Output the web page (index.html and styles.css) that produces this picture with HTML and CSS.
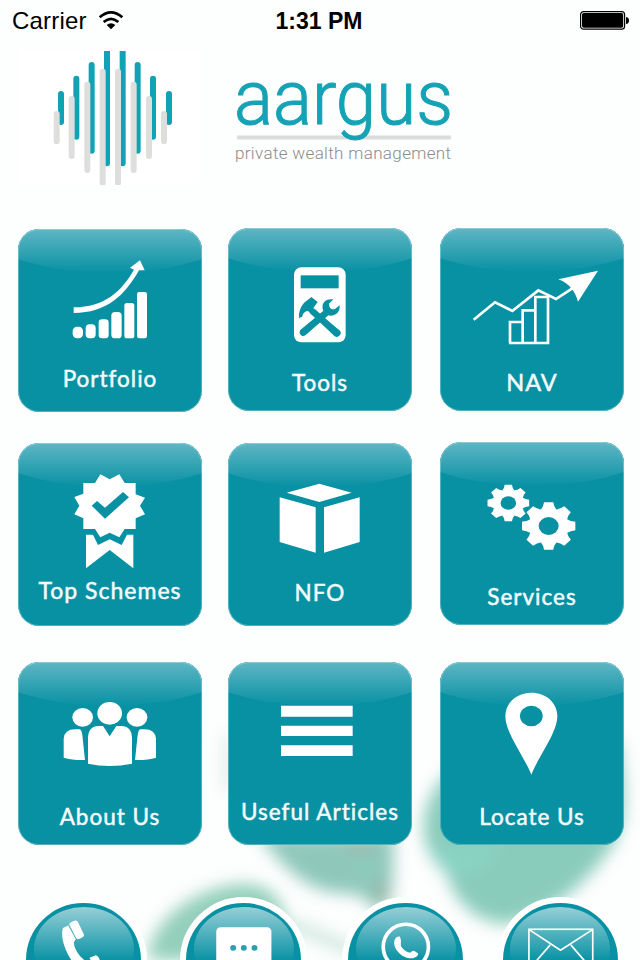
FILE: index.html
```html
<!DOCTYPE html>
<html lang="en">
<head>
    <meta charset="UTF-8">
    <meta name="viewport" content="width=device-width, initial-scale=1.0">
    <title>Aargus Private Wealth Management</title>
    <link rel="stylesheet" href="styles.css">
</head>
<body>
<div class="app">
    <svg class="leaves" viewBox="0 0 640 960">
        <g class="leaf-soft">
            <path fill="#8accbb" d="M425 815C430 780 470 745 530 740H618C626 790 628 825 608 852C585 885 545 918 505 924C470 921 452 895 447 874C430 860 420 840 425 815Z"/>
            <path fill="#89d3c4" d="M430 845H500C490 870 465 880 445 870Z"/>
            <path fill="#8fc8bb" d="M258 835H395C390 860 398 880 386 910H374C368 895 352 893 335 893C300 887 280 862 258 835Z"/>
            <path fill="#97b8a9" d="M374 878H388L388 905H376Z"/>
            <path fill="#9cb9ad" d="M345 840H375L372 854H350Z"/>
            <path fill="#88d0bf" d="M350 858L380 866L370 880Z"/>
            <path fill="#93cfba" d="M148 960C150 915 205 884 245 884C275 886 288 900 290 960Z"/>
            <path fill="none" stroke="#bfe0d5" stroke-width="9" d="M290 925C315 932 330 942 365 955"/>
            <path fill="none" stroke="#d3eae2" stroke-width="8" d="M228 735V790"/>
        </g>
    </svg>

    <div class="status-bar">
        <div class="carrier">
            <span>Carrier</span>
            <svg class="wifi" width="26" height="20" viewBox="0 0 78 60">
                <g fill="none" stroke="#000" stroke-width="8">
                    <path d="M5 22Q39-8 73 22"/>
                    <path d="M17 36Q39 17 61 36"/>
                </g>
                <path d="M26 45Q39 34 52 45L39 58Z"/>
            </svg>
        </div>
        <span class="time">1:31 PM</span>
        <svg class="battery" width="49" height="19" viewBox="0 0 49 19">
            <rect x=".6" y=".6" width="44" height="17.6" rx="3" fill="none" stroke="#000" stroke-width="1.2"/>
            <rect x="2" y="2" width="41.2" height="14.8" rx="1.8"/>
            <path d="M46 6Q49 6.500 49 9.400Q49 12.500 46 13Z"/>
        </svg>
    </div>

    <header class="brand">
        <svg class="brand-mark" width="182" height="134" viewBox="57 153 546 402">
            <g stroke="#10a3b5" stroke-width="18" stroke-linecap="round">
                <path d="M183 282V366M229 236V410M275 195V452M321 140V490M368 140V490M413 195V452M459 236V410M507 282V366"/>
            </g>
            <g stroke="#dededc" stroke-width="18" stroke-linecap="round">
                <path d="M170 342V424M215 297V468M262 254V510M308 215V549M354 215V549M401 254V510M447 297V468M492 342V424"/>
            </g>
        </svg>
        <svg class="brand-name" width="215" height="90" viewBox="0 0 215 90">
            <path d="M1 62.500H215" stroke="#dcdcdc" stroke-width="4"/>
            <text class="brand-word" x="-2" y="48.500" textLength="219" lengthAdjust="spacingAndGlyphs">aargus</text>
            <text class="brand-line" x="-1" y="84" textLength="216">private wealth management</text>
        </svg>
    </header>

    <main class="menu">
        <a class="tile drop">
            <svg viewBox="25 27 549 378">
                <g fill="#fff">
                    <rect x="189" y="320" width="31" height="35" rx="13"/>
                    <rect x="228" y="313" width="30" height="42" rx="12"/>
                    <rect x="267" y="298" width="30" height="57" rx="10"/>
                    <rect x="305" y="276" width="31" height="79" rx="11"/>
                    <rect x="344" y="249" width="30" height="106" rx="8"/>
                    <rect x="382" y="216" width="30" height="139" rx="7"/>
                    <path d="M192 262C285 261 335 215 373 149L361 143L391 121L405 151L388 151C345 227 291 279 192 279Z"/>
                </g>
            </svg>
            <span class="label portfolio">Portfolio</span>
        </a>
        <a class="tile">
            <svg viewBox="25 24 549 378">
                <rect x="223" y="142" width="155" height="225" rx="22" fill="#fff"/>
                <g fill="#0791a3">
                    <rect x="243" y="166" width="114" height="39"/>
                    <path d="M238 294C237 271 246 250 267 238L275 231L294 246L279 267L361 332A12 12 0 0 1 345 349L265 273C252 275 249 283 248 290Z"/>
                    <path d="M241 331L311 273C302 249 318 235 341 238L328 251C328 264 336 270 346 267L360 256C362 277 346 291 325 286L257 346A12 12 0 0 1 241 331Z"/>
                </g>
                <g stroke="#0791a3" stroke-width="19" stroke-linecap="round">
                    <path d="M250 338L318 280M280 275L351 338"/>
                </g>
            </svg>
            <span class="label tools">Tools</span>
        </a>
        <a class="tile">
            <svg viewBox="31 24 549 378">
                <g fill="none" stroke="#fff" stroke-width="8">
                    <path d="M132 299L196 247L248 273L326 211L379 237L428 205"/>
                    <path d="M241 369V306H279M279 369V271H317M317 369V231H355V369ZM238 369H355"/>
                </g>
                <path d="M386 178L505 152L445 245C438 219 421 190 386 178Z" fill="#fff"/>
            </svg>
            <span class="label nav">NAV</span>
        </a>
        <a class="tile drop">
            <svg viewBox="25 24 549 378">
                <path fill="#fff" d="M272 118L300 133L329 118L345 144H378V178L406 188L391 212L406 238L378 250V282H345L329 307L300 293L272 307L256 282H221V250L194 238L209 212L194 186L221 176V144H256Z"/>
                <path fill="#fff" d="M229 299H250L265 330L300 313L336 330L352 299H371V400L300 345L229 400Z"/>
                <path fill="#0791a3" d="M246 212L262 198L286 218L340 171L358 187L286 251Z"/>
            </svg>
            <span class="label schemes">Top Schemes</span>
        </a>
        <a class="tile drop">
            <svg viewBox="24 24 549 378">
                <path fill="#fff" d="M200 173L298 146L395 173L298 201ZM179 187L287 217V353L179 321ZM419 187L312 217V353L419 321Z"/>
            </svg>
            <span class="label nfo">NFO</span>
        </a>
        <a class="tile">
            <svg viewBox="31 21 549 378">
                <defs>
                    <path id="tooth" d="M-24-54Q-15-66-14-80H14Q15-66 24-54Z"/>
                    <g id="gear">
                        <circle r="59" fill="#fff"/>
                        <g fill="#fff">
                            <use href="#tooth"/>
                            <use href="#tooth" transform="rotate(45)"/>
                            <use href="#tooth" transform="rotate(90)"/>
                            <use href="#tooth" transform="rotate(135)"/>
                            <use href="#tooth" transform="rotate(180)"/>
                            <use href="#tooth" transform="rotate(225)"/>
                            <use href="#tooth" transform="rotate(270)"/>
                            <use href="#tooth" transform="rotate(315)"/>
                        </g>
                        <circle r="30" fill="#0791a3"/>
                    </g>
                </defs>
                <use href="#gear" transform="translate(236 204) scale(.78 .68)"/>
                <use href="#gear" transform="translate(357 273) scale(1 .89)"/>
            </svg>
            <span class="label services">Services</span>
        </a>
        <a class="tile">
            <svg viewBox="25 21 549 378">
                <g fill="#fff">
                    <ellipse cx="219" cy="187" rx="31" ry="28"/>
                    <ellipse cx="382" cy="187" rx="31" ry="28"/>
                    <ellipse cx="300" cy="175" rx="37" ry="34"/>
                    <path d="M162 308V252Q164 223 196 223H210Q216 225 218 240L226 315Q188 316 162 308Z"/>
                    <path d="M439 308V252Q437 223 405 223H392Q386 225 384 240L376 315Q414 316 439 308Z"/>
                    <path d="M235 326V249Q236 213 267 213H280L300 244L320 213H334Q366 213 367 249V326Q300 340 235 326Z"/>
                </g>
            </svg>
            <span class="label about">About Us</span>
        </a>
        <a class="tile">
            <svg viewBox="25 21 549 378">
                <path fill="#fff" d="M184 152H399V185H184ZM184 212H399V243H184ZM184 271H399V303H184Z"/>
            </svg>
            <span class="label articles">Useful Articles</span>
        </a>
        <a class="tile">
            <svg viewBox="661 21 549 378">
                <path fill="#fff" fill-rule="evenodd" d="M935 359C915 307 857 234 857 184C857 142 893 113 935 113C978 113 1013 142 1013 184C1013 234 955 307 935 359ZM935 152A34 31 0 1 0 935 214A34 31 0 1 0 935 152Z"/>
            </svg>
            <span class="label locate">Locate Us</span>
        </a>
    </main>

    <footer class="contact">
        <a class="round">
            <svg viewBox="79 188 346 346">
                <path fill="#fff" d="M190 263L206 256L229 298C218 306 223 324 242 348L270 375L260 410C215 375 178 305 190 263ZM209 252Q210 247 227 241Q233 240 236 247L254 284Q253 291 236 297L230 294ZM270 353L289 345Q294 345 298 353L310 380H285Z"/>
            </svg>
        </a>
        <a class="round">
            <svg viewBox="559 188 346 346">
                <rect x="650" y="261" width="166" height="140" rx="13" fill="#fff"/>
                <g fill="#2c9fb0">
                    <circle cx="701" cy="323" r="9"/>
                    <circle cx="733" cy="323" r="9"/>
                    <circle cx="765" cy="323" r="9"/>
                </g>
            </svg>
        </a>
        <a class="round">
            <svg viewBox="85 188 346 346">
                <circle cx="259" cy="320" r="68" fill="none" stroke="#fff" stroke-width="11"/>
                <path fill="#fff" d="M225 299Q231 287 241 289Q247 301 244 312C242 322 258 334 272 338Q279 330 284 332L296 340Q297 350 280 354C253 358 217 327 225 299Z"/>
            </svg>
        </a>
        <a class="round">
            <svg viewBox="548 188 346 346">
                <g fill="none" stroke="#fff" stroke-width="5">
                    <rect x="626" y="267" width="192" height="140"/>
                    <path d="M628 269L721 330L816 269M690 314L640 372M752 314L802 372"/>
                </g>
            </svg>
        </a>
    </footer>
</div>
</body>
</html>
```
FILE: styles.css
```css
/* Styling global */
body {
    margin: 0;
    background-color: #fdfefe;
    font-family: Lato, sans-serif;
}

.app {
    position: relative;
    width: 640px;
    height: 960px;
    overflow: hidden;
}

/* blurred plant behind the menu */
.leaves {
    position: absolute;
    top: 0;
    left: 0;
    width: 640px;
    height: 960px;
}

.leaf-soft {
    filter: blur(8px);
}

.status-bar {
    position: relative;
    display: grid;
    grid-template-columns: 1fr auto 1fr;
    align-items: center;
    height: 40px;
    padding: 0 11px 0 12px;
    font-family: "Liberation Sans", Arial, sans-serif;
    font-size: 24px;
    color: #000;
}

.carrier {
    display: flex;
    align-items: center;
    gap: 11px;
    letter-spacing: 0.2px;
}

.carrier span, .time {
    padding-top: 2px;
}

.time {
    padding-right: 3px;
    font-size: 23px;
    font-weight: bold;
}

.battery {
    justify-self: end;
}

.brand {
    position: relative;
    display: flex;
    height: 188px;
    padding: 11px 0 0 19px;
    box-sizing: border-box;
}

.brand-mark {
    background-color: #fff;
}

.brand-name {
    margin: 24px 0 0 35px;
    overflow: visible;
}

.brand-word {
    font-family: Roboto, sans-serif;
    font-size: 76px;
    font-weight: 300;
    fill: #15a2b5;
    stroke: #15a2b5;
    stroke-width: 1px;
}

.brand-line {
    font-family: Roboto, sans-serif;
    font-size: 17px;
    font-weight: 300;
    fill: #8c8c8c;
}

.menu {
    position: relative;
    display: grid;
    grid-template-columns: 210px 212px 184px;
    grid-template-rows: 214px 220px 183px;
    padding-left: 18px;
}

.tile {
    position: relative;
    display: flex;
    flex-direction: column;
    align-items: center;
    width: 184px;
    height: 183px;
    border-radius: 21px;
    background-color: #0791a3;
    overflow: hidden;
}

.tile.drop {
    margin-top: 1px;
}

/* gloss */
.tile::before {
    content: "";
    position: absolute;
    top: -20px;
    left: -30%;
    width: 160%;
    height: 64px;
    border-radius: 0 0 50% 50% / 0 0 100% 100%;
    background: linear-gradient(#5fb6c4 20px, #0791a3);
}

/* thin light rim */
.tile::after {
    content: "";
    position: absolute;
    inset: 0;
    border: 1px solid rgba(255, 255, 255, 0.3);
    border-radius: 21px;
}

.tile svg {
    position: relative;
    align-self: flex-start;
    width: 183px;
    height: 126px;
}

.label {
    position: relative;
    color: #f4fbfc;
    font-size: 22.5px;
    line-height: 24px;
    letter-spacing: 1px;
    white-space: nowrap;
    -webkit-text-stroke: 0.5px #f4fbfc;
}

.portfolio, .nfo, .articles {
    margin-top: 12px;
}

.tools, .services, .about, .locate {
    margin-top: 17px;
}

.nav {
    margin-top: 16px;
    font-size: 23.5px;
}

.schemes {
    margin-top: 9px;
    font-size: 23px;
}

.contact {
    position: relative;
    display: grid;
    grid-template-columns: 160px 162px 154.5px 127px;
    padding: 52px 0 0 20px;
}

.round {
    position: relative;
    width: 127px;
    height: 127px;
    box-sizing: border-box;
    border: 6px solid #fff;
    border-radius: 50%;
    background-color: #0791a3;
}

.round::before {
    content: "";
    position: absolute;
    top: 4px;
    left: 7.5px;
    width: 100px;
    height: 84px;
    border-radius: 50%;
    background: linear-gradient(#96cfd7, #0791a3 65%);
}

.round svg {
    position: relative;
    display: block;
    width: 115px;
    height: 115px;
}
```
